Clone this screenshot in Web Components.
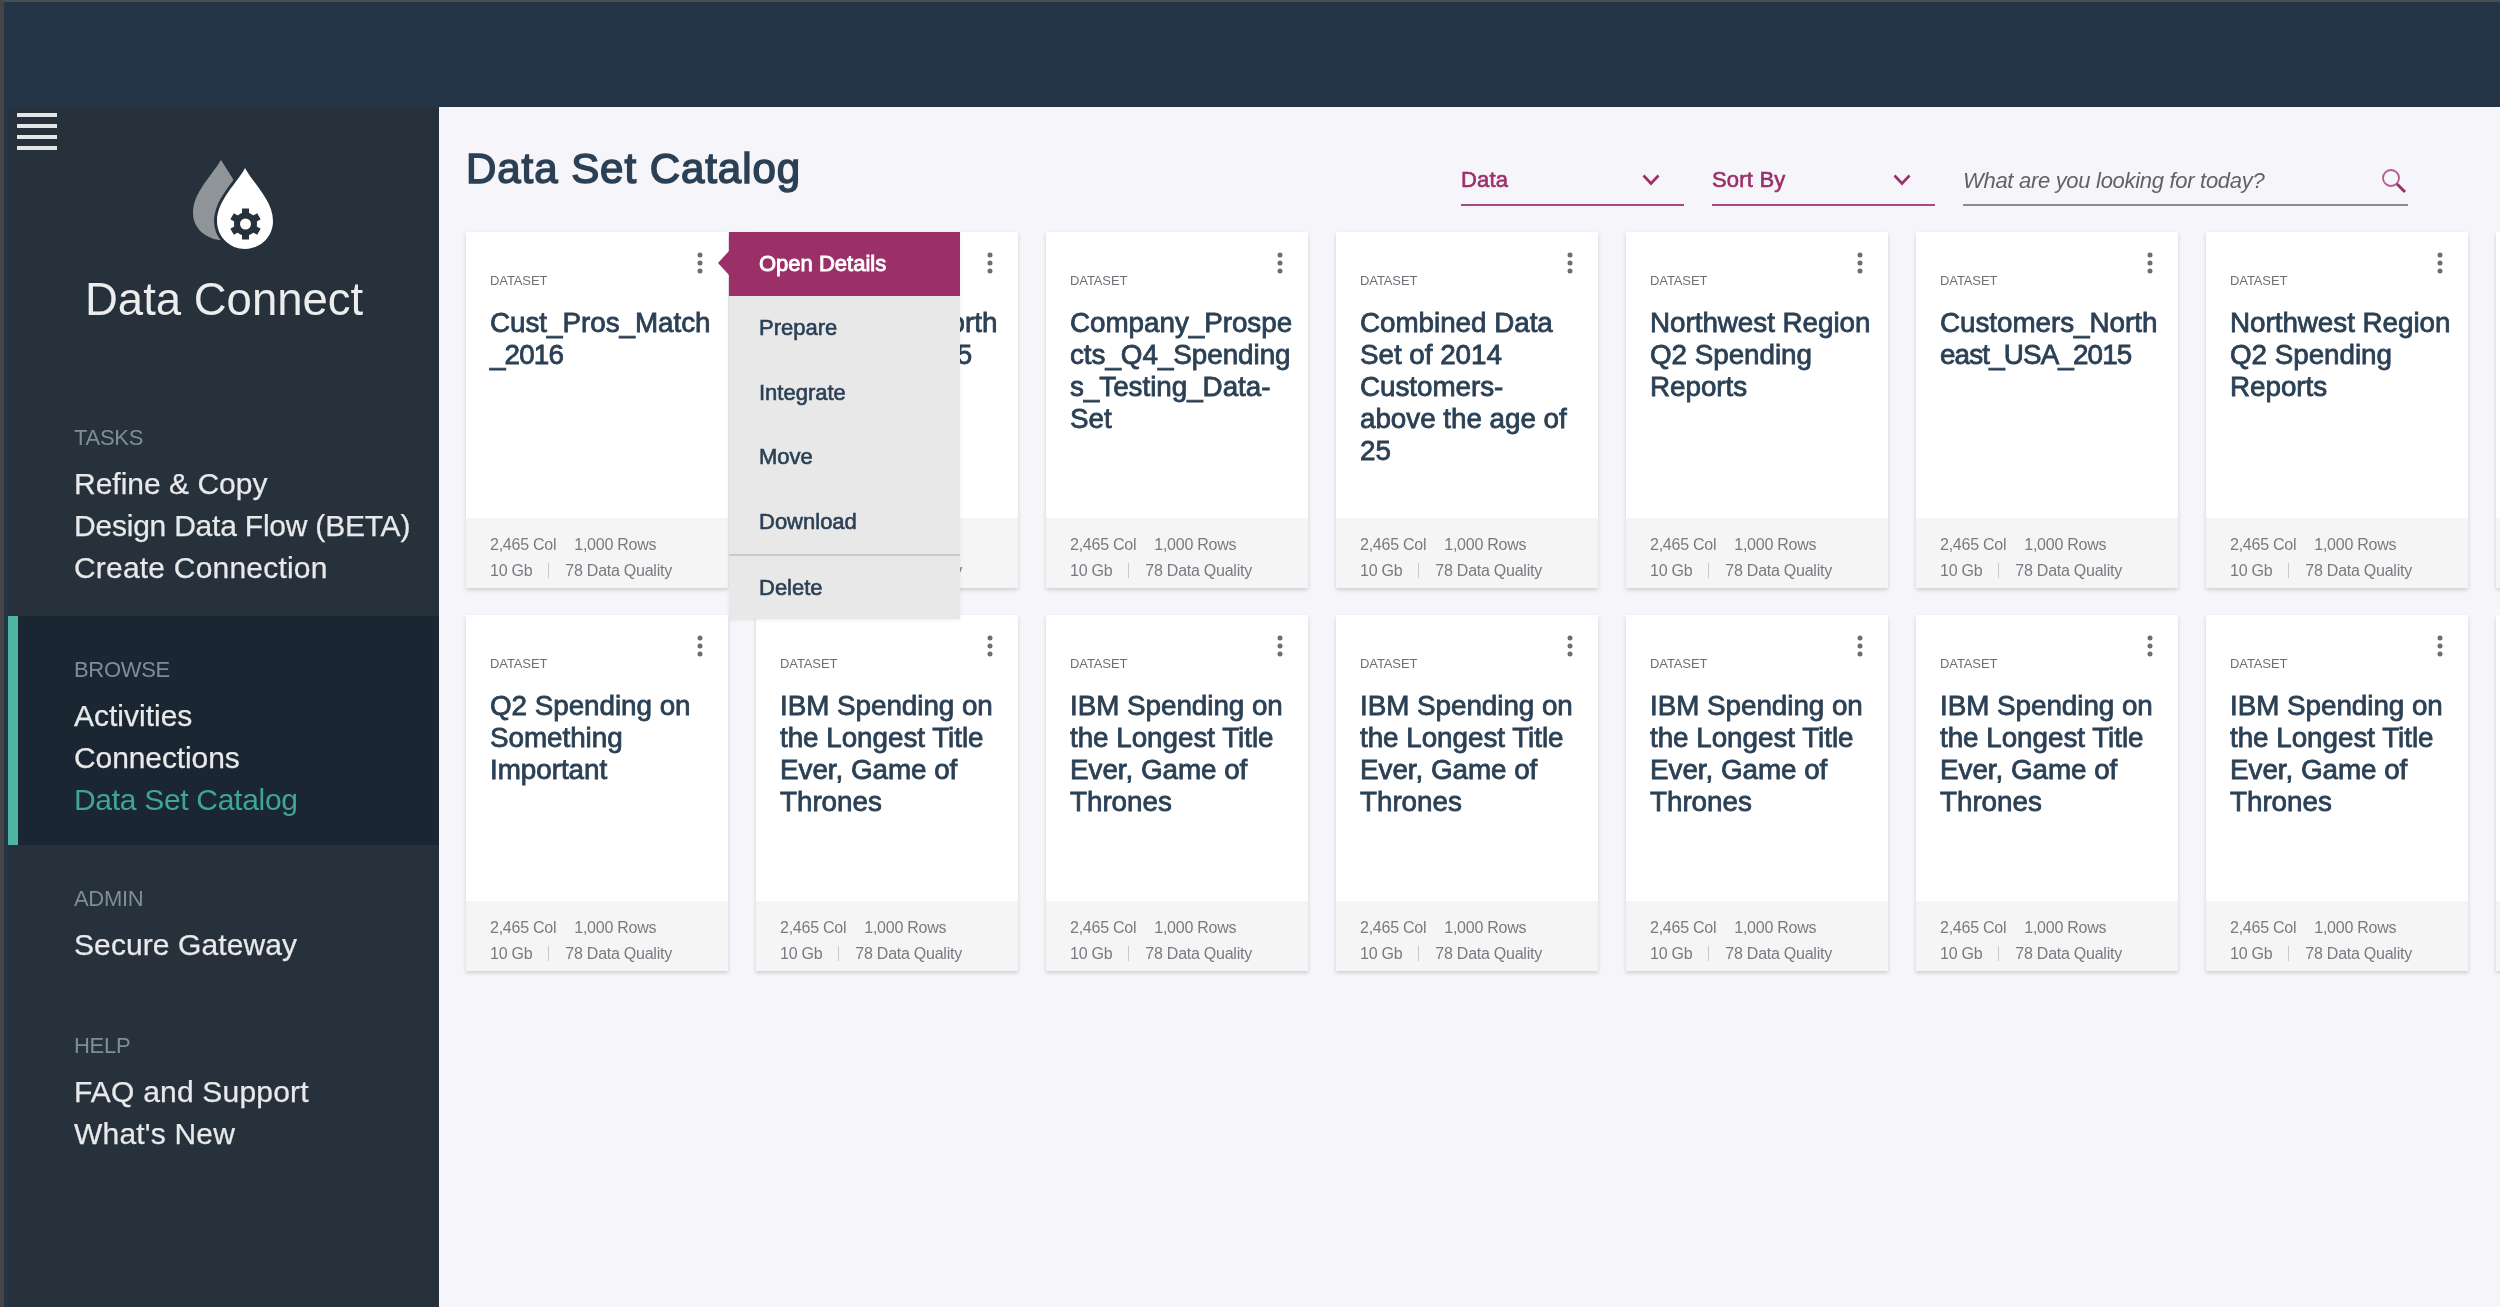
<!DOCTYPE html>
<html lang="en">
<head>
<meta charset="utf-8">
<title>Data Set Catalog</title>
<style>
  html, body { margin: 0; height: 100%; }
  body { font-family: "Liberation Sans", Arial, sans-serif; background: #243547; overflow: hidden; }
  .tight { letter-spacing: -0.85px; }
</style>
</head>
<body>
<app-shell>
  <side-nav slot="nav">
    <nav-section label="TASKS" style="--pad-bottom:27.2px">
      <a>Refine &amp; Copy</a>
      <a style="letter-spacing:-0.22px">Design Data Flow (BETA)</a>
      <a style="letter-spacing:0.2px">Create Connection</a>
    </nav-section>
    <nav-section label="BROWSE" active style="--pad-bottom:24.2px">
      <a>Activities</a>
      <a style="letter-spacing:-0.1px">Connections</a>
      <a current style="letter-spacing:-0.3px">Data Set Catalog</a>
    </nav-section>
    <nav-section label="ADMIN" style="--pad-bottom:26px">
      <a style="letter-spacing:0.1px">Secure Gateway</a>
    </nav-section>
    <nav-section label="HELP">
      <a style="letter-spacing:0.2px">FAQ and Support</a>
      <a style="letter-spacing:0.2px">What's New</a>
    </nav-section>
  </side-nav>

  <catalog-page heading="Data Set Catalog">
    <filter-select slot="filters" label="Data"></filter-select>
    <filter-select slot="filters" label="Sort By"></filter-select>
    <search-box slot="filters" placeholder="What are you looking for today?"></search-box>

    <dataset-card slot="cards">Cust_Pros_Match<br><span class="tight">_2016</span></dataset-card>
    <dataset-card slot="cards">Customers_North<br><span class="tight">east_USA_2015</span></dataset-card>
    <dataset-card slot="cards">Company_Prospe<br>cts_Q4_Spending<br>s_Testing_Data-<br>Set</dataset-card>
    <dataset-card slot="cards">Combined Data<br>Set of 2014<br>Customers-<br>above the age of<br>25</dataset-card>
    <dataset-card slot="cards">Northwest Region<br>Q2 Spending<br>Reports</dataset-card>
    <dataset-card slot="cards">Customers_North<br><span class="tight">east_USA_2015</span></dataset-card>
    <dataset-card slot="cards">Northwest Region<br>Q2 Spending<br>Reports</dataset-card>
    <dataset-card slot="cards" blank></dataset-card>

    <dataset-card slot="cards">Q2 Spending on<br>Something<br>Important</dataset-card>
    <dataset-card slot="cards">IBM Spending on<br>the Longest Title<br>Ever, Game of<br>Thrones</dataset-card>
    <dataset-card slot="cards">IBM Spending on<br>the Longest Title<br>Ever, Game of<br>Thrones</dataset-card>
    <dataset-card slot="cards">IBM Spending on<br>the Longest Title<br>Ever, Game of<br>Thrones</dataset-card>
    <dataset-card slot="cards">IBM Spending on<br>the Longest Title<br>Ever, Game of<br>Thrones</dataset-card>
    <dataset-card slot="cards">IBM Spending on<br>the Longest Title<br>Ever, Game of<br>Thrones</dataset-card>
    <dataset-card slot="cards">IBM Spending on<br>the Longest Title<br>Ever, Game of<br>Thrones</dataset-card>
    <dataset-card slot="cards" blank></dataset-card>

    <card-menu slot="overlay">
      <span current>Open Details</span>
      <span>Prepare</span>
      <span>Integrate</span>
      <span>Move</span>
      <span>Download</span>
      <span divided>Delete</span>
    </card-menu>
  </catalog-page>
</app-shell>

<script>
const INK = "#2b4055";
const MAGENTA = "#9b2f68";

class AppShell extends HTMLElement {
  constructor() {
    super();
    this.attachShadow({ mode: "open" });
    this.shadowRoot.innerHTML = `
      <style>
        :host {
          display: flex;
          flex-direction: column;
          height: 1307px;
          box-sizing: border-box;
          border-top: 2px solid #4a4f55;
          border-left: 4px solid #454545;
          background: #243547;
          filter: blur(0.45px);
        }
        .top { height: 105px; flex: none; }
        .row { flex: 1; display: flex; min-height: 0; padding-left: 4px; }
      </style>
      <div class="top"></div>
      <div class="row">
        <slot name="nav"></slot>
        <slot></slot>
      </div>
    `;
  }
}

class SideNav extends HTMLElement {
  constructor() {
    super();
    this.attachShadow({ mode: "open" });
    this.shadowRoot.innerHTML = `
      <style>
        :host {
          display: flex;
          flex-direction: column;
          flex: none;
          width: 431px;
          background: #26313c;
        }
        .brand { height: 277px; box-sizing: border-box; position: relative; }
        .burger {
          position: absolute; left: 9px; top: 6px;
          width: 40px; display: flex; flex-direction: column; gap: 7px;
        }
        .burger i { display: block; height: 4px; background: #e4e6e8; }
        .logo { position: absolute; left: 182px; top: 51px; display: block; }
        .name {
          position: absolute; left: 0; right: 0; top: 167px;
          padding-left: 77px;
          font-size: 45.5px; line-height: 52px; color: #eceded;
        }
      </style>
      <div class="brand">
        <div class="burger"><i></i><i></i><i></i><i></i></div>
        <svg class="logo" width="94" height="94" viewBox="190 158 94 94">
          <path fill="#8f9499" d="M221 160L240 190V240H219C205 238 193 228 193 213C193 193 210 178 221 160Z"/>
          <path fill="#fff" stroke="#26313c" stroke-width="6" paint-order="stroke"
            d="M245 168C252 182 273 200 273 221C273 237 260 249 245 249C230 249 217 237 217 221C217 200 238 182 245 168Z"/>
          <g fill="#26313c">
            <rect x="242" y="208.500" width="7" height="7"/>
            <rect x="242" y="208.500" width="7" height="7" transform="rotate(60 245.500 224)"/>
            <rect x="242" y="208.500" width="7" height="7" transform="rotate(120 245.500 224)"/>
            <rect x="242" y="208.500" width="7" height="7" transform="rotate(180 245.500 224)"/>
            <rect x="242" y="208.500" width="7" height="7" transform="rotate(240 245.500 224)"/>
            <rect x="242" y="208.500" width="7" height="7" transform="rotate(300 245.500 224)"/>
            <circle cx="245.500" cy="224" r="11.500"/>
          </g>
          <circle cx="245.500" cy="224" r="5.500" fill="#fff"/>
        </svg>
        <div class="name">Data Connect</div>
      </div>
      <slot></slot>
    `;
  }
}

class NavSection extends HTMLElement {
  constructor() {
    super();
    this.attachShadow({ mode: "open" });
    this.shadowRoot.innerHTML = `
      <style>
        :host {
          display: block;
          box-sizing: border-box;
          position: relative;
          padding: 38.8px 0 var(--pad-bottom, 23.5px) 66px;
        }
        :host([active]) { background: #1a2631; }
        :host([active])::before {
          content: ""; position: absolute; left: 0; top: 0; bottom: 0;
          width: 10px; background: #4fb5a3;
        }
        .label {
          font-size: 22px; line-height: 30px; letter-spacing: -0.3px;
          color: #808d99; margin-bottom: 10px;
        }
        ::slotted(a) {
          display: block;
          font-size: 30px; line-height: 42px;
          color: #e8e9ea;
          -webkit-text-stroke: 0.25px #e8e9ea;
        }
        ::slotted(a[current]) { color: #3fa697; -webkit-text-stroke: 0; }
      </style>
      <div class="label"></div>
      <slot></slot>
    `;
    this.shadowRoot.querySelector(".label").textContent = this.getAttribute("label");
  }
}

class CatalogPage extends HTMLElement {
  constructor() {
    super();
    this.attachShadow({ mode: "open" });
    this.shadowRoot.innerHTML = `
      <style>
        :host {
          display: block;
          flex: 1;
          min-width: 0;
          position: relative;
          overflow: hidden;
          background: #f5f5fa;
        }
        header {
          display: flex;
          height: 125px;
          box-sizing: border-box;
          padding: 0 92px 0 27px;
        }
        h1 {
          margin: 0; padding-top: 35.5px;
          font-size: 42px; line-height: 52px; font-weight: 400;
          letter-spacing: 0.95px;
          -webkit-text-stroke: 1.5px ${INK};
          color: ${INK};
        }
        .filters { margin-left: auto; display: flex; gap: 28px; padding-top: 54.5px; }
        .grid {
          display: grid;
          grid-template-columns: repeat(8, 262px);
          grid-auto-rows: 356px;
          column-gap: 28px;
          row-gap: 27px;
          padding-left: 27px;
        }
      </style>
      <header>
        <h1></h1>
        <div class="filters"><slot name="filters"></slot></div>
      </header>
      <div class="grid"><slot name="cards"></slot></div>
      <slot name="overlay"></slot>
    `;
    this.shadowRoot.querySelector("h1").textContent = this.getAttribute("heading");
  }
}

class FilterSelect extends HTMLElement {
  constructor() {
    super();
    this.attachShadow({ mode: "open" });
    this.shadowRoot.innerHTML = `
      <style>
        :host {
          display: flex;
          align-items: center;
          justify-content: space-between;
          box-sizing: border-box;
          width: 223px;
          height: 44px;
          padding: 0 24px 6px 0;
          border-bottom: 2px solid #a9497f;
          font-size: 22px;
          letter-spacing: 0.2px;
          color: ${MAGENTA};
          -webkit-text-stroke: 0.6px ${MAGENTA};
        }
        svg { display: block; }
      </style>
      <span></span>
      <svg width="18" height="12" viewBox="0 0 18 12" fill="none" stroke="${MAGENTA}" stroke-width="2.600">
        <path d="M1.500 1.500L9 9.500L16.500 1.500"/>
      </svg>
    `;
    this.shadowRoot.querySelector("span").textContent = this.getAttribute("label");
  }
}

class SearchBox extends HTMLElement {
  constructor() {
    super();
    this.attachShadow({ mode: "open" });
    this.shadowRoot.innerHTML = `
      <style>
        :host {
          display: flex;
          align-items: center;
          justify-content: space-between;
          box-sizing: border-box;
          width: 445px;
          height: 44px;
          padding: 0 1px 4px 0;
          border-bottom: 2px solid #8c8c8c;
          font-size: 22px;
          font-style: italic;
          letter-spacing: -0.3px;
          color: #5f6367;
        }
        svg { display: block; }
      </style>
      <span></span>
      <svg width="26" height="26" viewBox="0 0 26 26" fill="none">
        <circle cx="10" cy="10" r="8" stroke="#b5588e" stroke-width="1.800"/>
        <path d="M16 16L24 24" stroke="${MAGENTA}" stroke-width="3"/>
      </svg>
    `;
    this.shadowRoot.querySelector("span").textContent = this.getAttribute("placeholder");
  }
}

class DatasetCard extends HTMLElement {
  constructor() {
    super();
    this.attachShadow({ mode: "open" });
  }

  connectedCallback() {
    const blank = this.hasAttribute("blank");
    this.shadowRoot.innerHTML = `
      <style>
        :host {
          display: flex;
          flex-direction: column;
          background: #fff;
          box-shadow: 0 2px 4px rgba(0, 0, 0, 0.16);
        }
        .body { flex: 1; padding: 19.5px 10px 0 24px; min-height: 0; }
        .kebab { display: block; margin: 0 15px 0 auto; }
        .type {
          margin-top: -0.5px;
          font-size: 13px; line-height: 16px; color: #6b7075;
          letter-spacing: -0.1px;
        }
        .title {
          margin-top: 17.5px;
          font-size: 27.8px; line-height: 32px; letter-spacing: -0.03px;
          color: ${INK};
          -webkit-text-stroke: 0.8px ${INK};
        }
        .stats {
          flex: none;
          height: 70px;
          box-sizing: border-box;
          padding: 13.5px 0 0 24px;
          background: #f5f5f5;
          font-size: 16px; line-height: 26px; letter-spacing: -0.25px;
          color: #777b80;
        }
        .line { display: flex; gap: 18px; align-items: center; }
        .line.q { gap: 16px; }
        .rule { width: 1px; height: 15px; background: #c8c8c8; }
      </style>
      <div class="body">
        ${blank ? "" : `
        <svg class="kebab" width="6" height="22" viewBox="0 0 6 22" fill="#6a6f74">
          <circle cx="3" cy="3" r="2.500"/><circle cx="3" cy="11" r="2.500"/><circle cx="3" cy="19" r="2.500"/>
        </svg>
        <div class="type">DATASET</div>
        <div class="title"><slot></slot></div>`}
      </div>
      <div class="stats">
        ${blank ? "" : `
        <div class="line"><span>2,465 Col</span><span>1,000 Rows</span></div>
        <div class="line q"><span>10 Gb</span><span class="rule"></span><span>78 Data Quality</span></div>`}
      </div>
    `;
  }
}

class CardMenu extends HTMLElement {
  constructor() {
    super();
    this.attachShadow({ mode: "open" });
    this.shadowRoot.innerHTML = `
      <style>
        :host {
          position: absolute;
          left: 290px;
          top: 125px;
          width: 231px;
          display: flex;
          flex-direction: column;
          background: #e8e8e8;
          box-shadow: 0 1px 3px rgba(0, 0, 0, 0.08);
        }
        :host::before {
          content: ""; position: absolute; left: -11px; top: 19px;
          border-style: solid; border-width: 12px 11px 12px 0;
          border-color: transparent ${MAGENTA} transparent transparent;
        }
        ::slotted(span) {
          display: flex; align-items: center;
          height: 64.500px;
          box-sizing: border-box;
          padding-left: 30px;
          font-size: 22px;
          color: ${INK};
          -webkit-text-stroke: 0.6px ${INK};
        }
        ::slotted(span[current]) {
          height: 64px;
          background: ${MAGENTA};
          color: #fff;
          -webkit-text-stroke: 0.9px #fff;
        }
        ::slotted(span[divided]) { height: 65px; border-top: 2px solid #cacaca; }
      </style>
      <slot></slot>
    `;
  }
}

customElements.define("app-shell", AppShell);
customElements.define("side-nav", SideNav);
customElements.define("nav-section", NavSection);
customElements.define("catalog-page", CatalogPage);
customElements.define("filter-select", FilterSelect);
customElements.define("search-box", SearchBox);
customElements.define("dataset-card", DatasetCard);
customElements.define("card-menu", CardMenu);
</script>
</body>
</html>
